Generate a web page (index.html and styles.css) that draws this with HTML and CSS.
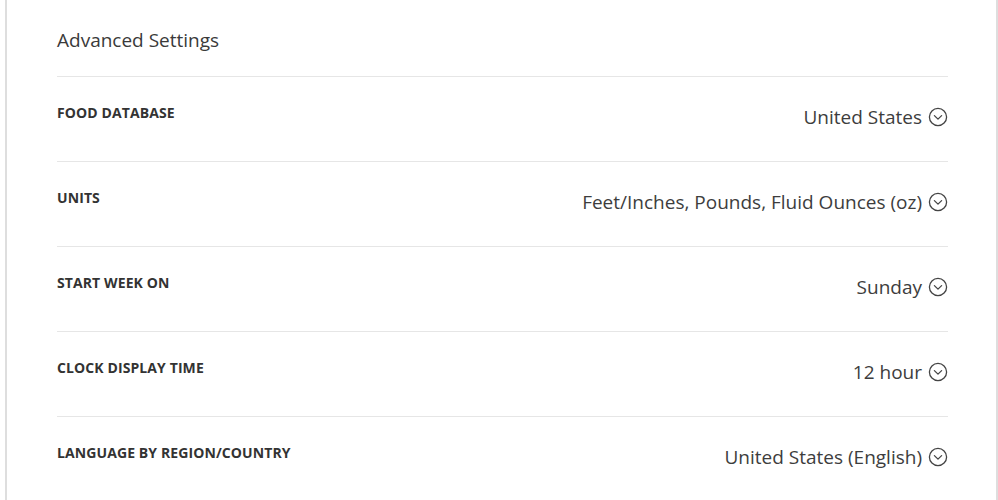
FILE: index.html
```html
<!DOCTYPE html>
<html lang="en">
<head>
  <meta charset="UTF-8" />
  <meta name="viewport" content="width=device-width, initial-scale=1.0"/>
  <title>Advanced Settings</title>
  <link rel="stylesheet" href="styles.css">
</head>
<body>

  <div class="panel">
    <h2 class="title">Advanced Settings</h2>

    <div class="row">
      <span class="label">Food Database</span>
      <span class="value">United States
        <svg class="chev" viewBox="0 0 20 20"><circle cx="10" cy="10" r="8.6"/><path d="M6.4 8.6 L10 12.1 L13.6 8.6"/></svg>
      </span>
    </div>

    <div class="row">
      <span class="label">Units</span>
      <span class="value">Feet/Inches, Pounds, Fluid Ounces (oz)
        <svg class="chev" viewBox="0 0 20 20"><circle cx="10" cy="10" r="8.6"/><path d="M6.4 8.6 L10 12.1 L13.6 8.6"/></svg>
      </span>
    </div>

    <div class="row">
      <span class="label">Start Week On</span>
      <span class="value">Sunday
        <svg class="chev" viewBox="0 0 20 20"><circle cx="10" cy="10" r="8.6"/><path d="M6.4 8.6 L10 12.1 L13.6 8.6"/></svg>
      </span>
    </div>

    <div class="row">
      <span class="label">Clock Display Time</span>
      <span class="value">12 hour
        <svg class="chev" viewBox="0 0 20 20"><circle cx="10" cy="10" r="8.6"/><path d="M6.4 8.6 L10 12.1 L13.6 8.6"/></svg>
      </span>
    </div>

    <div class="row">
      <span class="label">Language by Region/Country</span>
      <span class="value">United States (English)
        <svg class="chev" viewBox="0 0 20 20"><circle cx="10" cy="10" r="8.6"/><path d="M6.4 8.6 L10 12.1 L13.6 8.6"/></svg>
      </span>
    </div>
  </div>

</body>
</html>
```

FILE: styles.css
```css
body {
  margin: 0;
  background: #fff;
  font-family: "Open Sans", Arial, sans-serif;
  color: #333;
}

.panel {
  margin-left: 5px;
  width: 993px;
  height: 500px;
  box-sizing: border-box;
  border-left: 2px solid #dedede;
  border-right: 2px solid #dedede;
  padding: 0 48px 0 50px;
  overflow: hidden;
}

.title {
  margin: 0;
  padding-top: 27px;
  height: 76px;
  box-sizing: border-box;
  font-size: 19px;
  line-height: 26px;
  font-weight: 400;
  color: #3a3a3a;
}

.row {
  display: flex;
  justify-content: space-between;
  align-items: flex-start;
  height: 85px;
  box-sizing: border-box;
  border-top: 1px solid #e6e6e6;
}

.label {
  margin-top: 28px;
  font-size: 14px;
  line-height: 16px;
  font-weight: 700;
  letter-spacing: 0.1px;
  text-transform: uppercase;
  color: #333;
}

.value {
  margin-top: 27px;
  display: flex;
  align-items: center;
  gap: 6px;
  font-size: 19px;
  line-height: 26px;
  color: #3d3d3d;
}

.chev {
  width: 20px;
  height: 20px;
  fill: none;
  stroke: #444;
  stroke-width: 1.3;
  stroke-linecap: round;
  stroke-linejoin: round;
}
```
